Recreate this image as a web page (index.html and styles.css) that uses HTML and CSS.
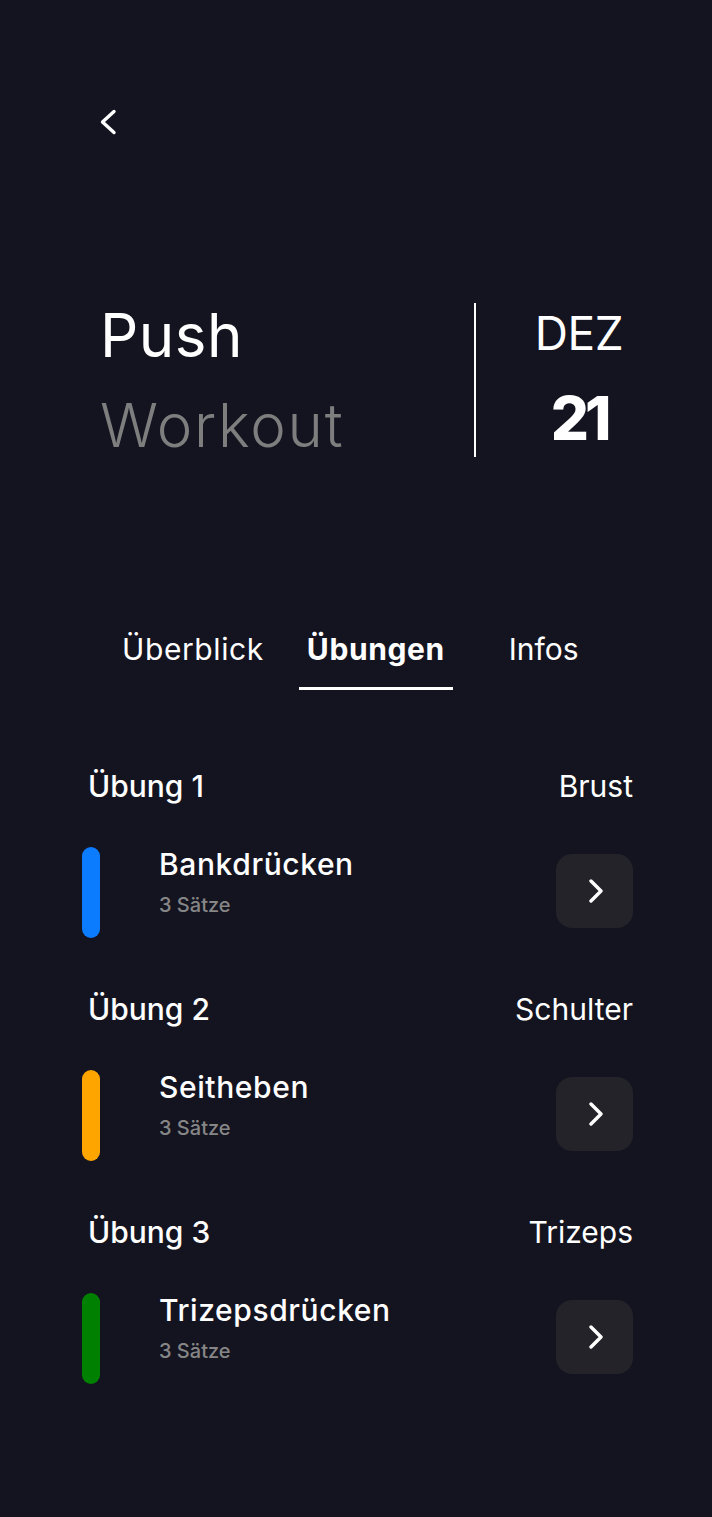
FILE: index.html
```html
<!DOCTYPE html>
<html lang="de">
<head>
<meta charset="utf-8">
<title>Push Workout</title>
<link rel="stylesheet" href="styles.css">
</head>
<body>
<div class="screen">
  <div class="topbar">
    <button class="back" aria-label="Zurück">
      <svg width="24" height="28" viewBox="0 0 24 28"><path d="M17 3.5 L5.5 14 L17 24.5" fill="none" stroke="#fff" stroke-width="3.4" stroke-linecap="round" stroke-linejoin="round"/></svg>
    </button>
  </div>

  <div class="hero">
    <div class="title">
      <div class="t1">Push</div>
      <div class="t2">Workout</div>
    </div>
    <div class="divider"></div>
    <div class="date">
      <div class="month">DEZ</div>
      <div class="day">21</div>
    </div>
  </div>

  <nav class="tabs">
    <div class="tab tab-a">Überblick</div>
    <div class="tab tab-b active">Übungen</div>
    <div class="tab tab-c">Infos</div>
  </nav>

  <div class="list">
    <section class="ex">
      <div class="ex-head"><span class="ex-num">Übung 1</span><span class="ex-muscle">Brust</span></div>
      <div class="ex-card">
        <div class="bar blue"></div>
        <div class="ex-info">
          <div class="ex-name">Bankdrücken</div>
          <div class="ex-sets">3 Sätze</div>
        </div>
        <button class="go" aria-label="Öffnen"><svg width="20" height="24" viewBox="0 0 20 24"><path d="M6 2 L16 12 L6 22" fill="none" stroke="#fff" stroke-width="3.4" stroke-linecap="round" stroke-linejoin="round"/></svg></button>
      </div>
    </section>
    <section class="ex">
      <div class="ex-head"><span class="ex-num">Übung 2</span><span class="ex-muscle">Schulter</span></div>
      <div class="ex-card">
        <div class="bar orange"></div>
        <div class="ex-info">
          <div class="ex-name">Seitheben</div>
          <div class="ex-sets">3 Sätze</div>
        </div>
        <button class="go" aria-label="Öffnen"><svg width="20" height="24" viewBox="0 0 20 24"><path d="M6 2 L16 12 L6 22" fill="none" stroke="#fff" stroke-width="3.4" stroke-linecap="round" stroke-linejoin="round"/></svg></button>
      </div>
    </section>
    <section class="ex">
      <div class="ex-head"><span class="ex-num">Übung 3</span><span class="ex-muscle">Trizeps</span></div>
      <div class="ex-card">
        <div class="bar green"></div>
        <div class="ex-info">
          <div class="ex-name">Trizepsdrücken</div>
          <div class="ex-sets">3 Sätze</div>
        </div>
        <button class="go" aria-label="Öffnen"><svg width="20" height="24" viewBox="0 0 20 24"><path d="M6 2 L16 12 L6 22" fill="none" stroke="#fff" stroke-width="3.4" stroke-linecap="round" stroke-linejoin="round"/></svg></button>
      </div>
    </section>
  </div>
</div>
</body>
</html>
```

FILE: styles.css
```css
* { box-sizing: border-box; }
html, body { margin: 0; padding: 0; }
body {
  background: #141421;
  color: #fff;
  font-family: "Inter", "Noto Sans", sans-serif;
  width: 712px;
  min-height: 1517px;
}
.screen { padding: 108px 79px 0 82px; }
.topbar { height: 30px; }
.back {
  background: none; border: 0; padding: 0; margin-left: 15px;
  width: 24px; height: 28px; display: block;
}
.back svg { display: block; }

.hero {
  display: flex;
  align-items: center;
  margin-top: 152px;
  margin-right: -60px;
  padding-left: 18px;
}
.title { width: 374px; flex: none; }
.t1, .t2 { font-size: 60px; line-height: 90px; }
.t1 { font-weight: 400; letter-spacing: 0.5px; }
.t2 { font-weight: 300; color: #7e7e7e; letter-spacing: 1.8px; }
.divider { width: 2px; height: 154px; background: #fff; flex: none; }
.date { width: 206px; flex: none; text-align: center; }
.month { font-size: 46px; line-height: 70px; font-weight: 400; letter-spacing: -0.5px; }
.day { font-size: 60px; line-height: 90px; font-weight: 800; letter-spacing: -4px; padding-top: 5px; }

.tabs {
  display: flex;
  margin-top: 159px;
  padding-left: 32px;
}
.tab {
  font-size: 30px;
  line-height: 40px;
  padding: 0 8px 18px;
  border-bottom: 3px solid transparent;
  font-weight: 400;
  letter-spacing: 0.6px;
}
.tab-b { margin-left: 27px; }
.tab-c { margin-left: 48px; letter-spacing: 0; }
.tab.active { font-weight: 700; border-bottom-color: #fff; }

.list { margin-top: 76px; }
.ex { height: 223px; }
.ex-head {
  display: flex;
  justify-content: space-between;
  padding-left: 6px;
  font-size: 30px;
  line-height: 40px;
}
.ex-num { font-weight: 500; }
.ex-muscle { font-weight: 400; }
.ex-card {
  display: flex;
  align-items: center;
  margin-top: 41px;
  height: 91px;
}
.bar { width: 18px; height: 91px; border-radius: 9px; flex: none; }
.blue { background: #0c7cff; }
.orange { background: #ffa500; }
.green { background: #008000; }
.ex-info { flex: 1; padding-left: 59px; align-self: flex-start; margin-top: -1px; }
.ex-name { font-size: 30px; line-height: 36px; font-weight: 500; letter-spacing: 0.6px; }
.ex-sets { font-size: 20px; line-height: 26px; font-weight: 500; color: #868686; margin-top: 10px; }
.go {
  width: 77px; height: 74px; flex: none;
  border: 0; border-radius: 16px;
  background: #232329;
  display: flex; align-items: center; justify-content: center;
  padding: 0;
  margin-top: -4px;
}
.go svg { display: block; }
```
